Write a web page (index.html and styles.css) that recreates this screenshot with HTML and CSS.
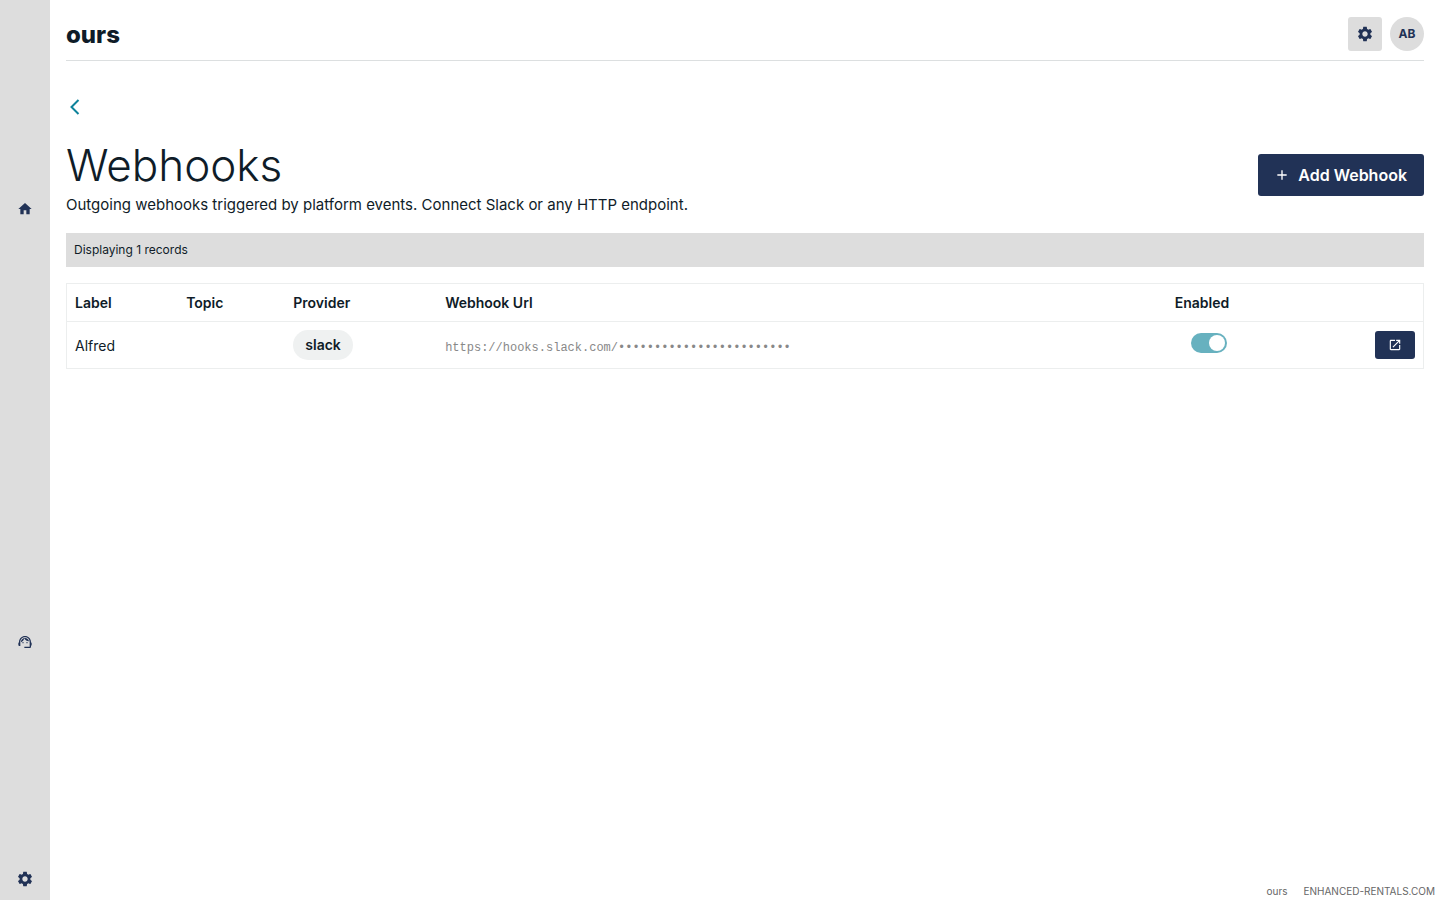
FILE: index.html
```html
<!DOCTYPE html>
<html lang="en">
<head>
<meta charset="utf-8">
<title>Webhooks</title>
<link rel="stylesheet" href="styles.css">
</head>
<body>
<svg class="sprite" aria-hidden="true">
  <symbol id="cog" viewBox="0 0 24 24"><path d="M19.14 12.94c.04-.3.06-.61.06-.94 0-.32-.02-.64-.07-.94l2.03-1.58c.18-.14.23-.41.12-.61l-1.92-3.32c-.12-.22-.37-.29-.59-.22l-2.39.96c-.5-.38-1.03-.7-1.62-.94l-.36-2.54c-.04-.24-.24-.41-.48-.41h-3.84c-.24 0-.43.17-.47.41l-.36 2.54c-.59.24-1.13.57-1.62.94l-2.39-.96c-.22-.08-.47 0-.59.22L2.74 8.87c-.12.21-.08.47.12.61l2.03 1.58c-.05.3-.09.63-.09.94s.02.64.07.94l-2.03 1.58c-.18.14-.23.41-.12.61l1.92 3.32c.12.22.37.29.59.22l2.39-.96c.5.38 1.03.7 1.62.94l.36 2.54c.05.24.24.41.48.41h3.84c.24 0 .44-.17.47-.41l.36-2.54c.59-.24 1.13-.56 1.62-.94l2.39.96c.22.08.47 0 .59-.22l1.92-3.32c.12-.22.07-.47-.12-.61l-2.01-1.58zM12 15.6c-1.98 0-3.6-1.62-3.6-3.6s1.62-3.6 3.6-3.6 3.6 1.62 3.6 3.6-1.62 3.6-3.6 3.6z"/></symbol>
</svg>
<div class="app">
  <nav class="sidebar" aria-label="Main">
    <div class="sidebar-group"><a class="sidebar-link" href="#" aria-label="Home"><svg class="icon" viewBox="0 0 24 24"><path d="M10 20v-6h4v6h5v-8h3L12 3 2 12h3v8z"/></svg></a></div>
    <div class="sidebar-group"><a class="sidebar-link" href="#" aria-label="Support"><svg class="icon" viewBox="0 0 24 24"><path d="M21 12.22C21 6.73 16.74 3 12 3c-4.69 0-9 3.65-9 9.28-.6.34-1 .98-1 1.72v2c0 1.1.9 2 2 2h1v-6.1c0-3.87 3.13-7 7-7s7 3.13 7 7V19h-8v2h8c1.1 0 2-.9 2-2v-1.22c.59-.31 1-.92 1-1.64v-2.3c0-.7-.41-1.31-1-1.62z"/><circle cx="9" cy="13" r="1"/><circle cx="15" cy="13" r="1"/><path d="M18 11.03C17.52 8.18 15.04 6 12.05 6c-3.03 0-6.29 2.51-6.03 6.45 2.47-1.01 4.33-3.21 4.86-5.89 1.31 2.63 4 4.44 7.12 4.47z"/></svg></a></div>
    <a class="sidebar-link" href="#" aria-label="Settings"><svg class="icon icon-lg"><use href="#cog"/></svg></a>
  </nav>
  <div class="page">
    <header class="topbar">
      <a class="brand" href="#">ours</a>
      <div class="topbar-actions">
        <button class="square" aria-label="Settings"><svg class="icon icon-lg"><use href="#cog"/></svg></button>
        <button class="avatar">AB</button>
      </div>
    </header>
    <main>
      <a class="back" href="#" aria-label="Back"><svg viewBox="0 0 18 18"><path d="M12.500 2 5.500 9l7 7"/></svg></a>
      <div class="heading">
        <div>
          <h1>Webhooks</h1>
          <p class="intro">Outgoing webhooks triggered by platform events. Connect Slack or any HTTP endpoint.</p>
        </div>
        <button class="add"><svg class="icon" viewBox="0 0 24 24"><path d="M19 13h-6v6h-2v-6H5v-2h6V5h2v6h6z"/></svg>Add Webhook</button>
      </div>
      <p class="summary">Displaying 1 records</p>
      <table class="records">
        <thead>
          <tr><th class="col-label">Label</th><th class="col-topic">Topic</th><th class="col-provider">Provider</th><th class="col-url">Webhook Url</th><th>Enabled</th><th></th></tr>
        </thead>
        <tbody>
          <tr>
            <td class="name">Alfred</td><td></td><td><span class="chip">slack</span></td>
            <td class="url">https://hooks.slack.com/••••••••••••••••••••••••</td>
            <td><input class="switch" type="checkbox" aria-label="Enabled" checked></td>
            <td class="row-action"><button class="open" aria-label="Open"><svg class="icon" viewBox="0 0 24 24"><path d="M19 19H5V5h7V3H5c-1.110 0-2 .9-2 2v14c0 1.100.89 2 2 2h14c1.100 0 2-.9 2-2v-7h-2v7zM14 3v2h3.590l-9.830 9.830 1.410 1.410L19 6.410V10h2V3h-7z"/></svg></button></td>
          </tr>
        </tbody>
      </table>
    </main>
    <footer><span>ours</span><span>ENHANCED-RENTALS.COM</span></footer>
  </div>
</div>
</body>
</html>
```
FILE: styles.css
```css
* { box-sizing: border-box; }
body { margin: 0; font: 14px/20px Inter, "Liberation Sans", sans-serif; color: #0f1c28; background: #fff; }
button { border: 0; padding: 0; font: inherit; cursor: pointer; }
a { color: inherit; text-decoration: none; }
h1, p { margin: 0; }
.sprite { display: none; }
.icon { width: 16px; height: 16px; fill: currentColor; flex: none; }
.icon-lg { width: 18px; height: 18px; }
.app { display: flex; min-height: 100vh; }
.sidebar { width: 50px; flex: none; display: flex; flex-direction: column; align-items: center; padding-bottom: 8px; background: #ddd; color: #213256; }
.sidebar-group { flex: 1; display: flex; align-items: center; padding-bottom: 16px; }
.sidebar-link { display: flex; align-items: center; justify-content: center; width: 34px; height: 26px; }
.page { flex: 1; min-width: 0; display: flex; flex-direction: column; }
.topbar { display: flex; justify-content: space-between; align-items: center; height: 61px; margin: 0 16px; padding-top: 8px; border-bottom: 1px solid #dcdfe0; }
.brand { padding-top: 2px; font-size: 24px; font-weight: 800; line-height: 32px; }
.topbar-actions { display: flex; gap: 8px; padding-bottom: 1px; }
.square, .avatar { display: flex; align-items: center; justify-content: center; width: 34px; height: 34px; background: #ddd; color: #213256; border-radius: 3px; }
.avatar { border-radius: 50%; font-size: 12px; font-weight: 700; }
main { flex: 1; padding: 37px 16px 0; }
.back { display: block; width: 18px; height: 18px; }
.back svg { display: block; width: 18px; height: 18px; fill: none; stroke: #0e839b; stroke-width: 2; }
.heading { display: flex; justify-content: space-between; align-items: center; margin-top: 20px; }
h1 { padding-top: 1px; font-size: 44px; font-weight: 300; line-height: 56px; }
.intro { font-size: 15px; line-height: 24px; }
.add { display: flex; align-items: center; gap: 8px; height: 42px; margin-bottom: 3px; padding: 0 17px 0 16px; border-radius: 3px; background: #213256; color: #fff; font-size: 16px; font-weight: 600; }
.summary { margin-top: 16px; padding: 7px 8px; background: #ddd; font-size: 12px; }
.records { width: 100%; margin-top: 16px; border: 1px solid #eceeee; border-collapse: separate; border-spacing: 0; table-layout: fixed; }
th { height: 38px; padding: 0 8px; text-align: left; font-weight: 600; border-bottom: 1px solid #eceeee; }
td { height: 46px; padding: 0 8px; }
.col-label { width: 8.2%; }
.col-topic { width: 7.9%; }
.col-provider { width: 11.2%; }
.col-url { width: 53.8%; }
.name { padding-top: 2px; }
.chip { display: inline-block; padding: 5px 12px; border-radius: 15px; background: #eff1f1; font-weight: 600; }
.url { padding-top: 6px; font: 12px/20px "Liberation Mono", monospace; color: #888; }
.switch { appearance: none; display: block; width: 36px; height: 20px; margin: 0 0 4px 16px; padding: 2px; border-radius: 10px; background: #67b1bf; }
.switch::before { content: ""; display: block; width: 16px; height: 16px; border-radius: 50%; background: #fff; }
.switch:checked::before { margin-left: auto; }
.row-action { text-align: right; }
.open { display: inline-flex; align-items: center; justify-content: center; width: 40px; height: 28px; vertical-align: middle; border-radius: 3px; background: #213256; color: #fff; }
.open .icon { width: 14px; height: 14px; }
footer { display: flex; justify-content: flex-end; gap: 16px; padding: 0 5px 1px; font-size: 10px; line-height: 16px; color: #666; }
```
